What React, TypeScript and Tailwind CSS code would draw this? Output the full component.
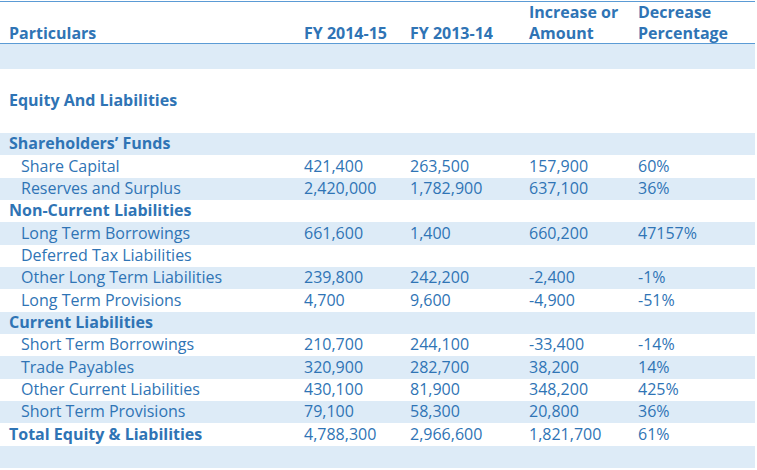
import React from "react";

type Row = { label: string; kind: "head" | "item" | "total" | "empty"; v?: string[] };

const rows: Row[] = [
  { label: "Shareholders’ Funds", kind: "head" },
  { label: "Share Capital", kind: "item", v: ["421,400", "263,500", "157,900", "60%"] },
  { label: "Reserves and Surplus", kind: "item", v: ["2,420,000", "1,782,900", "637,100", "36%"] },
  { label: "Non-Current Liabilities", kind: "head" },
  { label: "Long Term Borrowings", kind: "item", v: ["661,600", "1,400", "660,200", "47157%"] },
  { label: "Deferred Tax Liabilities", kind: "item" },
  { label: "Other Long Term Liabilities", kind: "item", v: ["239,800", "242,200", "-2,400", "-1%"] },
  { label: "Long Term Provisions", kind: "item", v: ["4,700", "9,600", "-4,900", "-51%"] },
  { label: "Current Liabilities", kind: "head" },
  { label: "Short Term Borrowings", kind: "item", v: ["210,700", "244,100", "-33,400", "-14%"] },
  { label: "Trade Payables", kind: "item", v: ["320,900", "282,700", "38,200", "14%"] },
  { label: "Other Current Liabilities", kind: "item", v: ["430,100", "81,900", "348,200", "425%"] },
  { label: "Short Term Provisions", kind: "item", v: ["79,100", "58,300", "20,800", "36%"] },
  { label: "Total Equity & Liabilities", kind: "total", v: ["4,788,300", "2,966,600", "1,821,700", "61%"] },
  { label: "", kind: "empty" },
];

const grid = "grid grid-cols-[295px_106px_119px_109px_1fr]";

export default function App() {
  return (
    <div
      className="w-[757px] h-[470px] bg-white overflow-hidden text-[16px] text-[#2f74b5]"
      style={{ fontFamily: '"Open Sans", "Noto Sans", sans-serif' }}
    >
      <div className="w-[755px] pt-px">
        <div className={`${grid} h-[43px] border-t border-b border-[#5b9bd5] font-bold leading-[21px] items-end pb-[1px]`}>
          <div className="pl-[9px]">Particulars</div>
          <div className="pl-[9px]">FY 2014-15</div>
          <div className="pl-[9px]">FY 2013-14</div>
          <div className="pl-[9px]">Increase or<br />Amount</div>
          <div className="pl-[9px]">Decrease<br />Percentage</div>
        </div>
        <div className="h-[25px] bg-[#ddebf7]" />
        <div className="h-[64px] flex items-center pl-[9px] font-bold pb-[2px]">Equity And Liabilities</div>
        {rows.map((r, i) => (
          <div
            key={i}
            className={`${grid} h-[22.35px] items-center leading-[20px] pb-[2px] ${i % 2 === 0 ? "bg-[#ddebf7]" : "bg-white"}`}
          >
            <div
              className={
                r.kind === "item" ? "pl-[21px] whitespace-nowrap" : "pl-[9px] font-bold whitespace-nowrap"
              }
            >
              {r.label}
            </div>
            {[0, 1, 2, 3].map((k) => (
              <div key={k} className="pl-[9px] whitespace-nowrap">
                {r.v ? r.v[k] : ""}
              </div>
            ))}
          </div>
        ))}
      </div>
    </div>
  );
}
